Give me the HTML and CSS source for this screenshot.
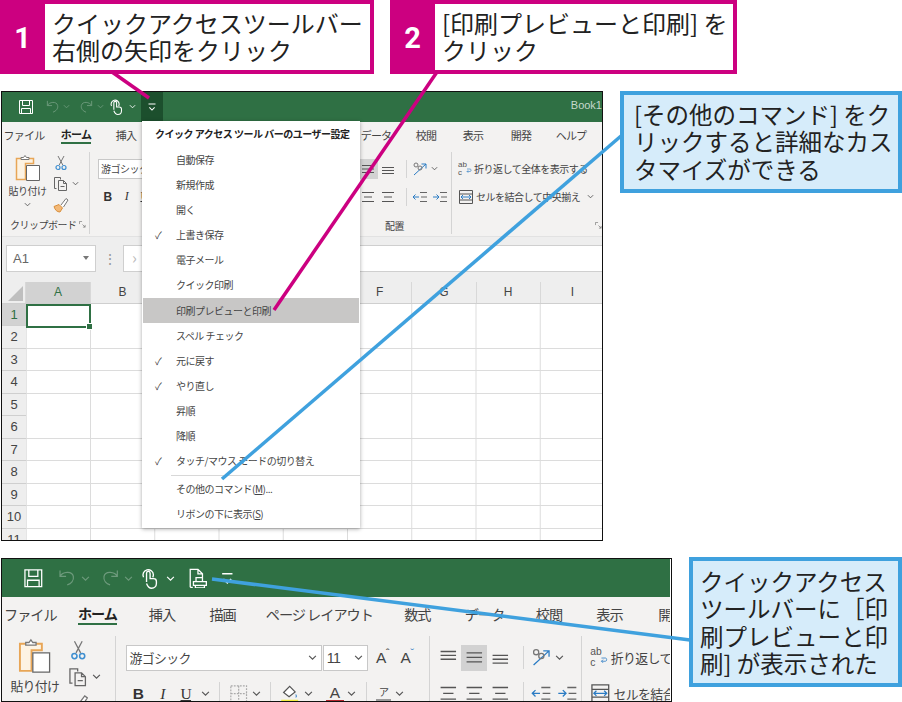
FILE: index.html
```html
<!DOCTYPE html>
<html lang="ja">
<head>
    <meta charset="utf-8">
    <title>クイックアクセスツールバー</title>
    <link rel="stylesheet" href="styles.css">
</head>
<body>
<svg class="defs" width="0" height="0">
    <symbol id="i-save" viewBox="0 0 16 16"><path d="M1.500 1.500h13v13h-13z M4.500 1.500v5h7v-5 M3.500 14.500v-5h9v5" fill="none" stroke="currentColor"/></symbol>
    <symbol id="i-undo" viewBox="0 0 16 16"><path d="M2.500 2v5h5 M2.500 7c2-4 10-5 11 0 .7 3.500-2 6-5 7" fill="none" stroke="currentColor"/></symbol>
    <symbol id="i-redo" viewBox="0 0 16 16"><path d="M13.500 2v5h-5 M13.500 7c-2-4-10-5-11 0-.7 3.500 2 6 5 7" fill="none" stroke="currentColor"/></symbol>
    <symbol id="i-touch" viewBox="0 0 16 16"><path d="M5.500 11V4.500a1.300 1.300 0 0 1 2.600 0V8.500h2.500c1.300 0 2.100.8 2.100 2v1.500c0 2-1.400 3.500-3.500 3.500-2 0-2.800-1.200-3.700-3.500 M3.300 7.500a3.800 3.800 0 1 1 7.200-1.800c0 .8-.2 1.300-.5 1.800" fill="none" stroke="currentColor"/></symbol>
    <symbol id="i-print" viewBox="0 0 16 16"><path d="M2.500 15V1h6l3.500 3.500v3 M8.500 1v3.500h3.500 M4.500 15h-2 M7 10V7.500h5V10 M5 10.500h10v3H5z M6.500 13.500v2h7v-2" fill="none" stroke="currentColor"/></symbol>
    <symbol id="i-more" viewBox="0 0 16 16"><path d="M4 4.500h8 M5 8.500l3 3 3-3" fill="none" stroke="currentColor" stroke-width="1.200"/></symbol>
    <symbol id="i-chev" viewBox="0 0 8 8"><path d="M1 2.500l3 3 3-3" fill="none" stroke="currentColor"/></symbol>
    <symbol id="i-paste" viewBox="0 0 26 28"><path d="M1.500 4.500h17v5h-8v16h-9z" fill="#fdf3e3" stroke="#e8a657" stroke-width="1.500"/><path d="M6 5.500V3.500h2.500l1.500-2 1.500 2H14v2z" fill="#fff" stroke="#777"/><path d="M11.500 11.500h13v15h-13z" fill="#fff" stroke="#666"/></symbol>
    <symbol id="i-cut" viewBox="0 0 16 16"><path d="M5 1l4.800 9 M11 1L6.200 10" fill="none" stroke="#777"/><circle cx="5" cy="12.500" r="2" fill="none" stroke="#3f8fd0" stroke-width="1.200"/><circle cx="11" cy="12.500" r="2" fill="none" stroke="#3f8fd0" stroke-width="1.200"/></symbol>
    <symbol id="i-copy" viewBox="0 0 16 16"><path d="M3.500 12.500h-2v-11h6v2 M5.500 4.500h5l3 3v7h-8z M10.500 4.500v3h3 M7.500 10.500h4" fill="none" stroke="#666"/></symbol>
    <symbol id="i-brush" viewBox="0 0 16 16"><path d="M1 9.500l5-2 3.500 3.500-2.500 4c-3 0-5-2-6-5.500z" fill="#f3b978" stroke="#d98f3c"/><path d="M8 8l5-6.500 2 1.500-4.500 7" fill="#fff" stroke="#777"/></symbol>
    <symbol id="i-launch" viewBox="0 0 8 8"><path d="M.5 3.500v-3h3 M4 4l3 3 M7 4.500V7H4.500" fill="none" stroke="#777" stroke-width=".8"/></symbol>
    <symbol id="i-top" viewBox="0 0 16 16"><path d="M2 3.500h12 M2 6.500h12 M2 9.500h12" stroke="currentColor"/></symbol>
    <symbol id="i-mid" viewBox="0 0 16 16"><path d="M2 4.500h12 M2 8h12 M2 11.500h12" stroke="currentColor"/></symbol>
    <symbol id="i-bot" viewBox="0 0 16 16"><path d="M2 6.500h12 M2 9.500h12 M2 12.500h12" stroke="currentColor"/></symbol>
    <symbol id="i-align" viewBox="0 0 16 16"><path d="M2 3.500h12 M4 8h8 M2 12.500h12" stroke="currentColor"/></symbol>
    <symbol id="i-outdent" viewBox="0 0 16 16"><path d="M8 3.500h7 M9 8h6 M8 12.500h7" stroke="#666"/><path d="M7 8H1 M3.500 5.500L1 8l2.500 2.500" fill="none" stroke="#2b7cc4"/></symbol>
    <symbol id="i-indent" viewBox="0 0 16 16"><path d="M8 3.500h7 M9 8h6 M8 12.500h7" stroke="#666"/><path d="M1 8h6 M4.500 5.500L7 8l-2.500 2.500" fill="none" stroke="#2b7cc4"/></symbol>
    <symbol id="i-orient" viewBox="0 0 16 16"><path d="M2 14L14 3 M9.500 3H14v4.500" fill="none" stroke="#2b7cc4"/><circle cx="4" cy="4" r="2" fill="none" stroke="#777"/><circle cx="8" cy="7" r="2" fill="none" stroke="#777"/></symbol>
    <symbol id="i-merge" viewBox="0 0 16 16"><path d="M1.500 1.500h13v13h-13z M1.500 5h13 M1.500 11h13" fill="none" stroke="#555"/><path d="M3 8h10 M5 6l-2 2 2 2 M11 6l2 2-2 2" fill="none" stroke="#2b7cc4"/></symbol>
    <symbol id="i-wrap" viewBox="0 0 16 16"><path d="M8 12h5c2 0 2-4 0-4H8 M10 10l-2 2 2 2" fill="none" stroke="#2b7cc4"/></symbol>
    <symbol id="i-border" viewBox="0 0 16 16"><path d="M1.500 1.500h13v13h-13z M8 1.500v13 M1.500 8h13" fill="none" stroke="#aaa" stroke-dasharray="1.500 1"/></symbol>
    <symbol id="i-fill" viewBox="0 0 16 16"><path d="M3 7l5-5 4.500 4.500-5 4z" fill="#fff" stroke="#555"/><path d="M13 8c1 1.500 1.500 2.500 0 3.500z" fill="#2b7cc4"/><path d="M1 13h14v2.500H1z" fill="#f4ee42"/></symbol>
</svg>

<div class="page">
    <div class="step-row">
        <div class="step step-one"><span class="step-no">1</span><p class="step-text">クイックアクセスツールバー<br>右側の矢印をクリック</p></div>
        <div class="step step-two"><span class="step-no">2</span><p class="step-text">[印刷プレビューと印刷] を<br>クリック</p></div>
    </div>

    <div class="shot-row shot-row-top">
        <div class="excel excel-small">
            <div class="excel-inner">
                <div class="titlebar">
                    <div class="qat">
                        <svg class="qat-save"><use href="#i-save"/></svg>
                        <svg class="qat-undo"><use href="#i-undo"/></svg>
                        <svg class="qat-chev dim"><use href="#i-chev"/></svg>
                        <svg class="qat-redo"><use href="#i-redo"/></svg>
                        <svg class="qat-chev dim"><use href="#i-chev"/></svg>
                        <svg class="qat-touch"><use href="#i-touch"/></svg>
                        <svg class="qat-chev"><use href="#i-chev"/></svg>
                        <span class="qat-btn qat-btn-open"><svg><use href="#i-more"/></svg></span>
                    </div>
                    <span class="book">Book1</span>
                </div>
                <div class="tabs">
                    <span>ファイル</span><span class="tab-on">ホーム</span><span>挿入</span><span>描画</span><span>ページ レイアウト</span><span>数式</span><span>データ</span><span>校閲</span><span>表示</span><span>開発</span><span>ヘルプ</span>
                </div>
                <div class="ribbon">
                    <div class="group group-clip">
                        <div class="group-body clip-body">
                            <div class="paste"><svg class="ic-paste"><use href="#i-paste"/></svg><span>貼り付け</span><svg class="ic-chev"><use href="#i-chev"/></svg></div>
                            <div class="clip-tools">
                                <svg class="ic"><use href="#i-cut"/></svg>
                                <div class="tool-line"><svg class="ic"><use href="#i-copy"/></svg><svg class="ic-chev"><use href="#i-chev"/></svg></div>
                                <svg class="ic"><use href="#i-brush"/></svg>
                            </div>
                        </div>
                        <div class="group-label"><span>クリップボード</span><svg class="ic-launch"><use href="#i-launch"/></svg></div>
                    </div>
                    <div class="group group-font">
                        <div class="font-row">
                            <div class="box box-font"><span>游ゴシック</span><svg class="ic-chev"><use href="#i-chev"/></svg></div>
                            <div class="box box-size"><span>11</span><svg class="ic-chev"><use href="#i-chev"/></svg></div>
                            <span class="grow-a">A<sup>ˆ</sup></span><span class="grow-a">A<sup class="blue">ˇ</sup></span>
                        </div>
                        <div class="font-row font-row-two">
                            <b class="fmt fmt-b">B</b><i class="fmt fmt-i">I</i><u class="fmt fmt-u">U</u><svg class="ic-chev"><use href="#i-chev"/></svg>
                            <span class="vsep"></span>
                            <svg class="ic ic-border"><use href="#i-border"/></svg><svg class="ic-chev"><use href="#i-chev"/></svg>
                            <span class="vsep"></span>
                            <svg class="ic ic-fill"><use href="#i-fill"/></svg><svg class="ic-chev"><use href="#i-chev"/></svg>
                            <span class="font-color">A</span><svg class="ic-chev"><use href="#i-chev"/></svg>
                            <span class="vsep"></span>
                            <span class="kana">ア</span><svg class="ic-chev"><use href="#i-chev"/></svg>
                        </div>
                    </div>
                    <div class="group group-align">
                        <div class="align-row">
                            <svg class="al"><use href="#i-top"/></svg>
                            <span class="al-on"><svg class="al"><use href="#i-mid"/></svg></span>
                            <svg class="al"><use href="#i-bot"/></svg>
                            <span class="vsep vsep-align"></span>
                            <svg class="ic"><use href="#i-orient"/></svg><svg class="ic-chev"><use href="#i-chev"/></svg>
                        </div>
                        <div class="align-row align-row-two">
                            <svg class="al"><use href="#i-align"/></svg>
                            <svg class="al"><use href="#i-align"/></svg>
                            <svg class="al"><use href="#i-align"/></svg>
                            <span class="vsep vsep-align"></span>
                            <svg class="ic"><use href="#i-outdent"/></svg><svg class="ic"><use href="#i-indent"/></svg>
                        </div>
                        <div class="group-label align-label"><span>配置</span></div>
                    </div>
                    <div class="group group-wrap">
                        <div class="wrap-line"><span class="ab">ab<br>c</span><svg class="ic ic-wrap"><use href="#i-wrap"/></svg><span>折り返して全体を表示する</span></div>
                        <div class="wrap-line"><svg class="ic"><use href="#i-merge"/></svg><span>セルを結合して中央揃え</span><svg class="ic-chev"><use href="#i-chev"/></svg></div>
                        <div class="group-label wrap-label"><svg class="ic-launch"><use href="#i-launch"/></svg></div>
                    </div>
                </div>
                <div class="formula">
                    <div class="namebox"><span>A1</span><i class="caret"></i></div>
                    <span class="dots">⋮</span>
                    <div class="fxbox">›</div>
                </div>
                <div class="sheet">
                    <div class="col-heads">
                        <span class="corner"><i></i></span>
                        <span class="col-on">A</span><span>B</span><span>C</span><span>D</span><span>E</span><span>F</span><span>G</span><span>H</span><span>I</span>
                    </div>
                    <div class="sheet-body">
                        <div class="row-heads">
                            <span class="row-on">1</span><span>2</span><span>3</span><span>4</span><span>5</span><span>6</span><span>7</span><span>8</span><span>9</span><span>10</span><span>11</span>
                        </div>
                        <div class="cells"></div>
                        <div class="cell-cursor"><i></i></div>
                    </div>
                </div>
            </div>
            <div class="menu">
                <div class="menu-head">クイック アクセス ツール バーのユーザー設定</div>
                <div class="menu-item">自動保存</div>
                <div class="menu-item">新規作成</div>
                <div class="menu-item">開く</div>
                <div class="menu-item is-checked">上書き保存</div>
                <div class="menu-item">電子メール</div>
                <div class="menu-item">クイック印刷</div>
                <div class="menu-item is-hover">印刷プレビューと印刷</div>
                <div class="menu-item">スペル チェック</div>
                <div class="menu-item is-checked">元に戻す</div>
                <div class="menu-item is-checked">やり直し</div>
                <div class="menu-item">昇順</div>
                <div class="menu-item">降順</div>
                <div class="menu-item is-checked">タッチ/マウス モードの切り替え</div>
                <div class="menu-sep"></div>
                <div class="menu-item">その他のコマンド(<u>M</u>)...</div>
                <div class="menu-item">リボンの下に表示(<u>S</u>)</div>
            </div>
        </div>
        <p class="note note-top">[その他のコマンド] をクリックすると詳細なカスタマイズができる</p>
    </div>

    <div class="shot-row shot-row-bottom">
        <div class="excel excel-big">
            <div class="excel-inner">
                <div class="titlebar">
                    <div class="qat">
                        <svg class="qat-save"><use href="#i-save"/></svg>
                        <svg class="qat-undo"><use href="#i-undo"/></svg>
                        <svg class="qat-chev dim"><use href="#i-chev"/></svg>
                        <svg class="qat-redo"><use href="#i-redo"/></svg>
                        <svg class="qat-chev dim"><use href="#i-chev"/></svg>
                        <svg class="qat-touch"><use href="#i-touch"/></svg>
                        <svg class="qat-chev"><use href="#i-chev"/></svg>
                        <span class="qat-btn"><svg><use href="#i-print"/></svg></span>
                        <span class="qat-btn"><svg><use href="#i-more"/></svg></span>
                    </div>
                </div>
                <div class="tabs">
                    <span>ファイル</span><span class="tab-on">ホーム</span><span>挿入</span><span>描画</span><span>ページ レイアウト</span><span>数式</span><span>データ</span><span>校閲</span><span>表示</span><span>開発</span>
                </div>
                <div class="ribbon">
                    <div class="group group-clip">
                        <div class="group-body clip-body">
                            <div class="paste"><svg class="ic-paste"><use href="#i-paste"/></svg><span>貼り付け</span><svg class="ic-chev"><use href="#i-chev"/></svg></div>
                            <div class="clip-tools">
                                <svg class="ic"><use href="#i-cut"/></svg>
                                <div class="tool-line"><svg class="ic"><use href="#i-copy"/></svg><svg class="ic-chev"><use href="#i-chev"/></svg></div>
                                <svg class="ic"><use href="#i-brush"/></svg>
                            </div>
                        </div>
                    </div>
                    <div class="group group-font">
                        <div class="font-row">
                            <div class="box box-font"><span>游ゴシック</span><svg class="ic-chev"><use href="#i-chev"/></svg></div>
                            <div class="box box-size"><span>11</span><svg class="ic-chev"><use href="#i-chev"/></svg></div>
                            <span class="grow-a">A<sup>ˆ</sup></span><span class="grow-a">A<sup class="blue">ˇ</sup></span>
                        </div>
                        <div class="font-row font-row-two">
                            <b class="fmt fmt-b">B</b><i class="fmt fmt-i">I</i><u class="fmt fmt-u">U</u><svg class="ic-chev"><use href="#i-chev"/></svg>
                            <span class="vsep"></span>
                            <svg class="ic ic-border"><use href="#i-border"/></svg><svg class="ic-chev"><use href="#i-chev"/></svg>
                            <span class="vsep"></span>
                            <svg class="ic ic-fill"><use href="#i-fill"/></svg><svg class="ic-chev"><use href="#i-chev"/></svg>
                            <span class="font-color">A</span><svg class="ic-chev"><use href="#i-chev"/></svg>
                            <span class="vsep"></span>
                            <span class="kana">ア</span><svg class="ic-chev"><use href="#i-chev"/></svg>
                        </div>
                    </div>
                    <div class="group group-align">
                        <div class="align-row">
                            <svg class="al"><use href="#i-top"/></svg>
                            <span class="al-on"><svg class="al"><use href="#i-mid"/></svg></span>
                            <svg class="al"><use href="#i-bot"/></svg>
                            <span class="vsep vsep-align"></span>
                            <svg class="ic"><use href="#i-orient"/></svg><svg class="ic-chev"><use href="#i-chev"/></svg>
                        </div>
                        <div class="align-row align-row-two">
                            <svg class="al"><use href="#i-align"/></svg>
                            <svg class="al"><use href="#i-align"/></svg>
                            <svg class="al"><use href="#i-align"/></svg>
                            <span class="vsep vsep-align"></span>
                            <svg class="ic"><use href="#i-outdent"/></svg><svg class="ic"><use href="#i-indent"/></svg>
                        </div>
                    </div>
                    <div class="group group-wrap">
                        <div class="wrap-line"><span class="ab">ab<br>c</span><svg class="ic ic-wrap"><use href="#i-wrap"/></svg><span>折り返して全</span></div>
                        <div class="wrap-line"><svg class="ic"><use href="#i-merge"/></svg><span>セルを結合</span></div>
                    </div>
                </div>
            </div>
        </div>
        <p class="note note-bottom">クイックアクセスツールバーに［印刷プレビューと印刷] が表示された</p>
    </div>

    <svg class="leaders" width="902" height="702">
        <path class="lead-pink" d="M112 72L149 98"/>
        <path class="lead-pink" d="M437 72L274 310"/>
        <path class="lead-blue" d="M621 136L222 479"/>
        <path class="lead-blue" d="M212 579L690 640"/>
    </svg>
</div>
</body>
</html>
```

FILE: styles.css
```css
html, body {
    margin: 0;
    background-color: #fff;
}
body {
    font-family: "Noto Sans CJK JP", "Noto Sans", sans-serif;
    color: #444;
}
.defs {
    display: block;
    height: 0;
}
.page {
    position: relative;
    width: 902px;
    height: 702px;
    overflow: hidden;
}

/* callouts */
.step-row {
    display: flex;
    gap: 16px;
    height: 74px;
}
.step {
    display: flex;
    box-sizing: border-box;
    height: 74px;
    padding: 4px 4px 4px 0;
    background-color: #cc0080;
}
.step-one {
    width: 374px;
}
.step-two {
    width: 347px;
}
.step-no {
    width: 45px;
    color: #fff;
    font: bold 29px/68px "Roboto", sans-serif;
    text-align: center;
}
.step-text {
    flex: 1;
    margin: 0;
    padding: 5px 0 0 7px;
    background-color: #fff;
    color: #222;
    font-size: 24px;
    line-height: 27.300px;
    white-space: nowrap;
}
.note {
    box-sizing: border-box;
    margin: 0;
    border: 4px solid #3fa1de;
    background-color: #d6ecfa;
    color: #222;
    font-size: 23.500px;
    line-height: 27.300px;
}
.note-top {
    width: 282px;
    height: 102px;
    margin-left: 17px;
    padding: 6px 4px 0 10px;
}
.note-bottom {
    width: 213px;
    height: 130px;
    margin-left: 17px;
    margin-top: -1px;
    padding: 7px 3px 0 7px;
}
.shot-row {
    display: flex;
    align-items: flex-start;
    padding-left: 1px;
}
.shot-row-top {
    margin-top: 17px;
    height: 450px;
}
.shot-row-bottom {
    margin-top: 17px;
}
.leaders {
    position: absolute;
    left: 0;
    top: 0;
}
.lead-pink, .lead-blue {
    fill: none;
    stroke-width: 3.500;
}
.lead-pink {
    stroke: #cc0080;
}
.lead-blue {
    stroke: #3fa1de;
}

/* excel window */
.excel {
    position: relative;
    flex: none;
    box-sizing: border-box;
    overflow: hidden;
    border: 1px solid #111;
    background-color: #fff;
}
.excel-small {
    width: 602px;
    height: 450px;
}
.excel-big {
    width: 671px;
    height: 144px;
}
.excel-inner {
    width: 600px;
}
.excel-big .excel-inner {
    zoom: 1.29;
    width: 518px;
    overflow: hidden;
}
.titlebar {
    display: flex;
    justify-content: space-between;
    height: 29.500px;
    background-color: #2f7044;
    color: #fff;
}
.qat {
    display: flex;
    align-items: center;
    padding-left: 16px;
}
.qat svg {
    flex: none;
}
.qat-save {
    width: 16px;
    height: 16px;
}
.qat-undo, .qat-redo {
    width: 15px;
    height: 15px;
    color: #6d9a7c;
}
.qat-undo {
    margin-left: 11px;
}
.qat-redo {
    margin-left: 9px;
}
.qat-chev {
    width: 7px;
    height: 7px;
    margin-left: 3px;
}
.qat-chev.dim {
    color: #6d9a7c;
}
.qat-touch {
    width: 17px;
    height: 17px;
    margin-left: 4px;
}
.qat-touch + .qat-chev {
    margin-left: 4px;
}
.qat-btn {
    display: flex;
    align-items: center;
    justify-content: center;
    width: 22px;
    height: 100%;
    margin-left: 5px;
}
.excel-big .qat-btn {
    margin-left: 6.500px;
}
.excel-big .qat-btn + .qat-btn {
    margin-left: 1px;
}
.qat-btn svg {
    width: 16px;
    height: 16px;
}
.qat-btn-open {
    background-color: #1c4f2d;
}
.qat-btn-open svg {
    width: 14px;
    height: 14px;
}
.book {
    padding: 3px 0 0;
    color: #c5d8cb;
    font: 11px/20px "Liberation Sans", sans-serif;
}
.tabs {
    display: grid;
    grid-template-columns: 44px 60px 40px 54px 96px 56px 48px 52px 42px 54px 46px;
    align-items: center;
    height: 26px;
    background-color: #f3f2f1;
    font-size: 11px;
    letter-spacing: -.8px;
    text-align: center;
    white-space: nowrap;
}
.tab-on {
    justify-self: center;
    color: #222;
    font-weight: bold;
}
.tab-on::after {
    content: "";
    display: block;
    height: 2px;
    background-color: #2f7044;
}

/* ribbon */
.ribbon {
    display: flex;
    height: 89px;
    box-sizing: border-box;
    background-color: #f3f2f1;
    border-bottom: 1px solid #e2e2e2;
    font-size: 10px;
    letter-spacing: -.5px;
}
.group {
    flex: none;
    box-sizing: border-box;
    border-right: 1px solid #d4d4d4;
    margin: 4px 0 2px;
}
.group-clip {
    display: flex;
    flex-direction: column;
    width: 88px;
}
.group-body {
    flex: 1;
}
.clip-body {
    display: flex;
    padding-left: 5px;
}
.paste {
    display: flex;
    flex-direction: column;
    align-items: center;
    width: 41px;
    padding-top: 2px;
    white-space: nowrap;
}
.ic-paste {
    width: 26px;
    height: 28px;
    margin-bottom: 2px;
}
.paste span {
    line-height: 14px;
}
.ic-chev {
    flex: none;
    width: 7px;
    height: 7px;
    color: #555;
}
.paste .ic-chev {
    margin-top: 3px;
}
.clip-tools {
    display: flex;
    flex-direction: column;
    gap: 5px;
    padding: 3px 0 0 5px;
}
.ic {
    display: block;
    flex: none;
    width: 16px;
    height: 16px;
}
.tool-line {
    display: flex;
    align-items: center;
    gap: 3px;
}
.group-label {
    display: flex;
    align-items: center;
    justify-content: space-between;
    height: 18px;
    padding: 0 3px 0 8px;
    white-space: nowrap;
}
.ic-launch {
    width: 7px;
    height: 7px;
}
.group-font {
    width: 244px;
    padding: 7px 0 0 8px;
}
.font-row {
    display: flex;
    align-items: center;
    height: 20px;
}
.box {
    display: flex;
    align-items: center;
    justify-content: space-between;
    box-sizing: border-box;
    height: 20px;
    padding: 0 3px 0 2px;
    border: 1px solid #c8c8c8;
    background-color: #fff;
}
.box-font {
    width: 152px;
}
.box-size {
    width: 35px;
    margin-left: 1px;
    font-family: "Liberation Sans", sans-serif;
    font-size: 11px;
}
.grow-a {
    margin-left: 6px;
    width: 13px;
    font: 12px/20px "Liberation Sans", sans-serif;
}
.grow-a sup {
    font-size: 9px;
    line-height: 0;
}
.blue {
    color: #2b7cc4;
}
.font-row-two {
    margin-top: 8px;
}
.font-row-two .ic-chev {
    margin-left: 3px;
}
.fmt {
    width: 19px;
    color: #333;
    font-family: "Liberation Serif", serif;
    font-size: 12px;
    text-align: center;
}
.fmt-b {
    font-family: "Liberation Sans", sans-serif;
}
.fmt-u {
    width: 17px;
}
.vsep {
    flex: none;
    width: 1px;
    height: 18px;
    margin: 0 7px;
    background-color: #d4d4d4;
}
.font-color {
    width: 14px;
    margin-left: 10px;
    border-bottom: 3px solid #b3272d;
    font: 12px/12px "Liberation Sans", sans-serif;
    text-align: center;
}
.kana {
    width: 12px;
    border-bottom: 2px double #999;
    font-size: 8px;
    line-height: 10px;
    text-align: center;
}
.ic-border, .ic-fill {
    width: 15px;
    height: 15px;
}
.group-align {
    width: 118px;
    padding: 7px 0 0 4px;
}
.align-row {
    display: flex;
    align-items: center;
    height: 20px;
    color: #555;
}
.align-row-two {
    margin-top: 8px;
}
.al {
    display: block;
    flex: none;
    width: 16px;
    height: 16px;
    margin: 0 2px;
}
.al-on {
    display: flex;
    align-items: center;
    height: 20px;
    background-color: #d2d2d2;
}
.align-row .ic-chev {
    margin-left: 3px;
}
.vsep-align {
    margin: 0 5px 0 8px;
}
.align-row-two .ic + .ic {
    margin-left: 4px;
}
.align-label {
    justify-content: center;
    margin-top: 10px;
    padding: 0;
}
.group-wrap {
    width: 150px;
    padding: 7px 0 0 6px;
    border-right: 0;
}
.wrap-line {
    display: flex;
    align-items: center;
    gap: 2px;
    height: 20px;
    margin-bottom: 8px;
    white-space: nowrap;
}
.wrap-line .ic-chev {
    margin-left: 5px;
}
.ab {
    width: 10px;
    color: #555;
    font: 8px/8px "Liberation Sans", sans-serif;
    letter-spacing: 0;
}
.ic-wrap {
    width: 10px;
    height: 14px;
    margin-left: -8px;
}
.wrap-label {
    justify-content: flex-end;
    margin-top: 10px;
    padding: 0;
}

/* formula bar and grid */
.formula {
    display: flex;
    align-items: flex-start;
    box-sizing: border-box;
    height: 45px;
    padding: 8px 0 0 4px;
    background-color: #eeeeee;
}
.namebox {
    display: flex;
    align-items: center;
    justify-content: space-between;
    box-sizing: border-box;
    width: 90px;
    height: 27px;
    padding: 0 6px;
    border: 1px solid #cfcfcf;
    background-color: #fff;
    font: 13px "Liberation Sans", sans-serif;
    color: #666;
}
.caret {
    border: 3.500px solid transparent;
    border-top: 4px solid #777;
    border-bottom: 0;
}
.dots {
    width: 27px;
    color: #999;
    font-size: 14px;
    line-height: 26px;
    text-align: center;
}
.fxbox {
    flex: 1;
    height: 27px;
    box-sizing: border-box;
    padding-left: 8px;
    border: 1px solid #cfcfcf;
    border-right: 0;
    background-color: #fff;
    color: #bbb;
    font-size: 16px;
    line-height: 22px;
}
.col-heads {
    display: grid;
    grid-template-columns: 24px 65px repeat(8, 64.250px);
    height: 21px;
    background-color: #eeeeee;
    border-bottom: 1px solid #cfcfcf;
    font: 12px/21px "Liberation Sans", sans-serif;
    text-align: center;
}
.col-heads span {
    border-right: 1px solid #d8d8d8;
}
.col-heads .col-on {
    background-color: #d2d2d2;
    color: #2f7044;
}
.corner {
    position: relative;
}
.corner i {
    position: absolute;
    right: 2px;
    bottom: 2px;
    border-style: solid;
    border-width: 0 0 15px 15px;
    border-color: transparent transparent #bfbfbf transparent;
}
.sheet-body {
    display: flex;
    position: relative;
}
.row-heads {
    flex: none;
    width: 24px;
    background-color: #eeeeee;
    font: 13px/22.500px "Liberation Sans", sans-serif;
    text-align: center;
}
.row-heads span {
    display: block;
    box-sizing: border-box;
    height: 22.500px;
    border-bottom: 1px solid #cfcfcf;
}
.row-heads .row-on {
    background-color: #d2d2d2;
    color: #2f7044;
}
.cells {
    flex: 1;
    background-image:
        repeating-linear-gradient(to bottom, transparent 0, transparent 21.500px, #dcdcdc 21.500px, #dcdcdc 22.500px),
        linear-gradient(to right, #dcdcdc 1px, transparent 1px);
    background-size: auto, 64.250px 100%;
    background-position: 0 0, 64px 0;
}
.cell-cursor {
    position: absolute;
    left: 24px;
    top: 0;
    box-sizing: border-box;
    width: 65px;
    height: 24px;
    border: 2px solid #2f7044;
}
.cell-cursor i {
    position: absolute;
    right: -4px;
    bottom: -4px;
    width: 5px;
    height: 5px;
    background-color: #2f7044;
    border: 1px solid #fff;
}

/* dropdown */
.menu {
    position: absolute;
    left: 140px;
    top: 29px;
    box-sizing: border-box;
    width: 218px;
    height: 407px;
    background-color: #fff;
    box-shadow: 0 1px 4px rgba(0, 0, 0, .35);
    font-size: 10px;
    letter-spacing: -.5px;
    white-space: nowrap;
}
.menu-head {
    height: 26px;
    padding-left: 13px;
    color: #222;
    font-weight: bold;
    line-height: 25px;
}
.menu-item {
    position: relative;
    height: 25.100px;
    margin: 0 1px;
    padding-left: 33px;
    line-height: 25px;
}
.is-hover {
    background-color: #c8c7c6;
}
.is-checked::before {
    content: "✓";
    position: absolute;
    left: 12px;
    font-size: 10px;
}
.menu-sep {
    height: 1px;
    margin: 2px 0 0 29px;
    background-color: #d8d8d8;
}
```
